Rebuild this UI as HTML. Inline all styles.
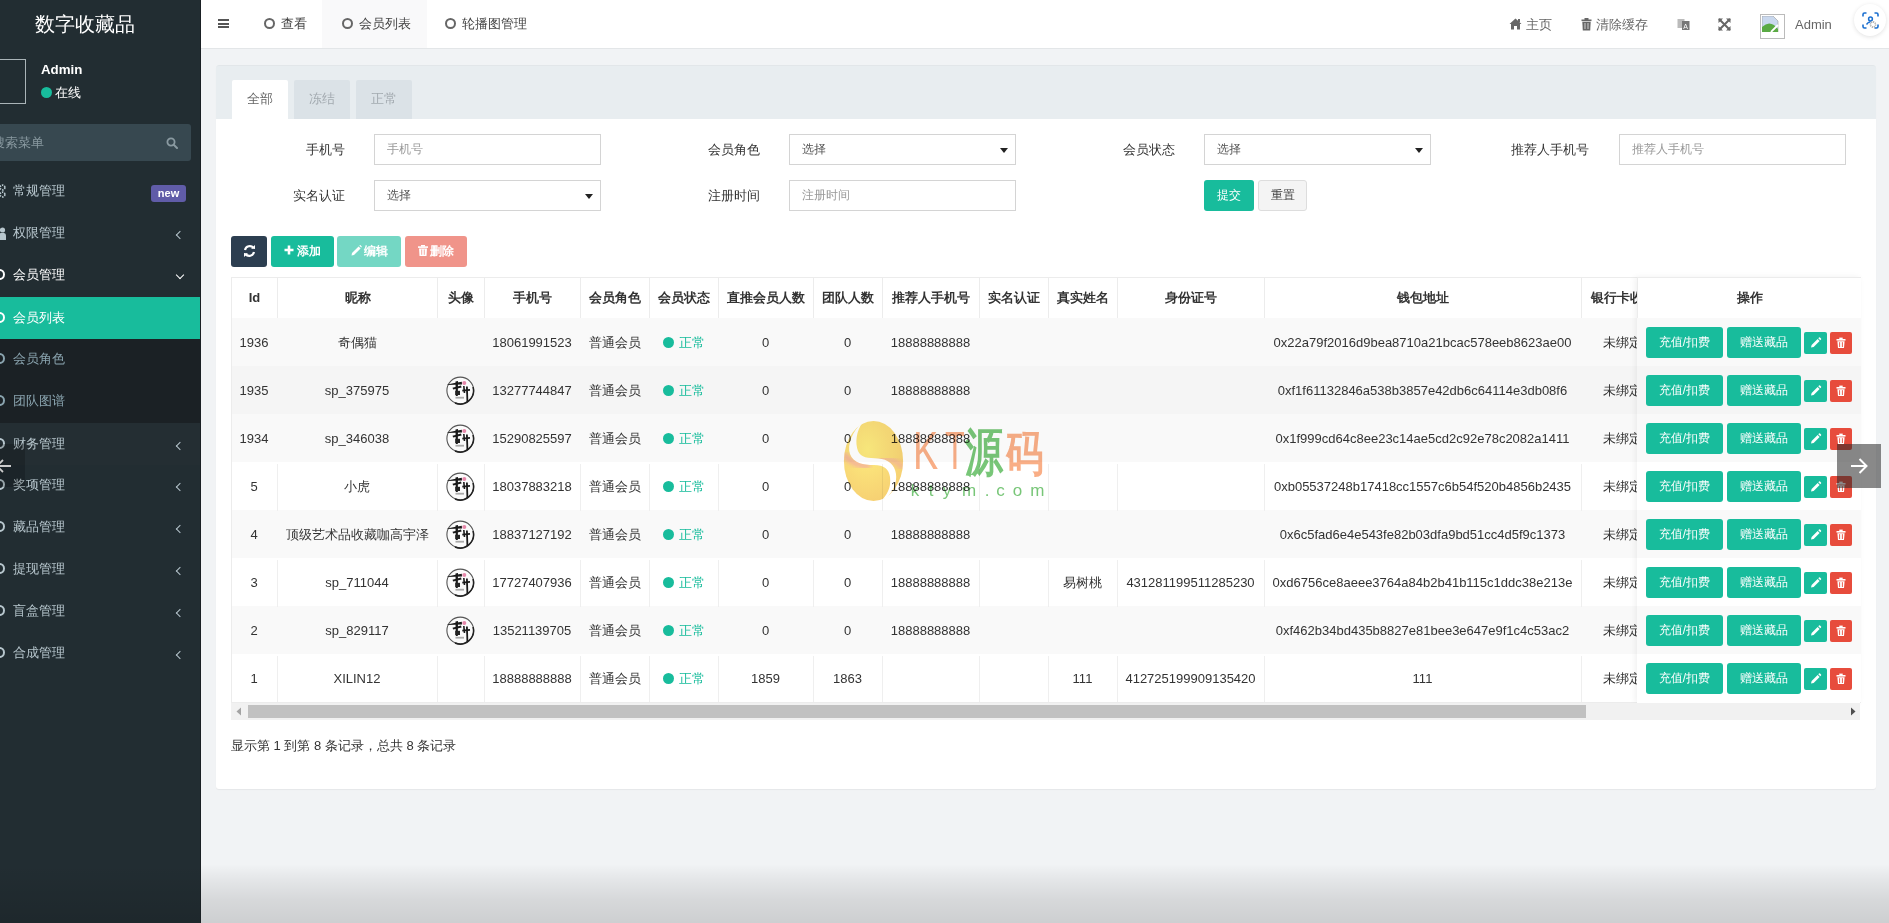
<!DOCTYPE html>
<html><head><meta charset="utf-8">
<style>
*{box-sizing:border-box;margin:0;padding:0}
html,body{width:1889px;height:923px;overflow:hidden}
body{font-family:"Liberation Sans",sans-serif;font-size:13px;color:#333;background:#f1f3f5;position:relative}
.a{position:absolute;white-space:nowrap}
#side{position:absolute;left:0;top:0;width:201px;height:923px;background:#222d32;overflow:hidden;border-right:1px solid #1a2024}
#side .logo{left:0;width:170px;text-align:center;top:10px;font-size:20px;color:#fff;line-height:28px}
.avatar{left:-20px;top:59px;width:46px;height:45px;border:1px solid #aab4b8}
.uname{left:41px;top:62px;font-size:13.3px;font-weight:bold;color:#fff;line-height:16px}
.ustat{left:41px;top:85px;font-size:13px;color:#fff;line-height:16px}
.ustat i{display:inline-block;width:11px;height:11px;border-radius:50%;background:#18bc9c;vertical-align:-1px;margin-right:3px}
.search{left:0;top:124px;width:191px;height:37px;background:#374850;border-radius:0 3px 3px 0}
.search span{position:absolute;left:-8px;top:0;line-height:37px;color:#8a9aa1;font-size:13px}
.mi{position:absolute;left:0;width:200px;height:42px}
.mi .t{position:absolute;left:13px;top:0;line-height:42px;color:#b8c7ce;font-size:13px}
.mi .ic{position:absolute;left:-6px;top:15px;width:11px;height:11px;border:2px solid #b8c7ce;border-radius:50%}
.mi .chev{position:absolute;left:177px;top:20px;width:6px;height:6px;border-left:1.5px solid #b8c7ce;border-bottom:1.5px solid #b8c7ce;transform:rotate(45deg)}
.mi .chev.dn{transform:rotate(-45deg);top:18px}
#hdr{position:absolute;left:201px;top:0;width:1688px;height:49px;background:#fff;border-bottom:1px solid #e3e6e8}
.hb{left:218px;top:19px;width:11px;height:9px;border-top:2px solid #555;border-bottom:2px solid #555}
.hb:after{content:"";position:absolute;left:0;top:1.5px;width:11px;height:2px;background:#555}
.htab{top:0;height:48px;line-height:47px;color:#444;font-size:13px}
.htab i{display:inline-block;width:11px;height:11px;border:2px solid #666;border-radius:50%;vertical-align:-1px;margin-right:6px}
.hr{top:0;height:48px;line-height:49px;color:#666;font-size:13px}
.panel{left:216px;top:65px;width:1660px;height:724px;background:#fff;border-radius:3px;box-shadow:0 1px 1px rgba(0,0,0,.05)}
.ph{left:216px;top:65px;width:1660px;height:54px;background:#e8edf0;border-radius:3px 3px 0 0;border-top:1px solid #e2e6e9}
.ptab{top:80px;height:39px;line-height:37px;text-align:center;font-size:13px;border-radius:2px 2px 0 0}
.lbl{width:120px;text-align:right;font-size:13px;color:#333;line-height:31px}
.inp{height:31px;width:227px;border:1px solid #d4d4d4;background:#fff;font-size:12px;line-height:29px;padding-left:12px;color:#999}
.sel{color:#555}
.sel:after{content:"";position:absolute;right:7px;top:13px;border-left:4px solid transparent;border-right:4px solid transparent;border-top:5px solid #222}
.btn{height:31px;line-height:31px;border-radius:3px;color:#fff;font-size:12px;text-align:center}
.th{position:absolute;top:0;height:41px;line-height:40px;text-align:center;font-weight:bold;font-size:13px;color:#333;border-left:1px solid #ececec;border-bottom:1px solid #ddd;background:#fff}
.tr{position:absolute;left:0;width:1629px;height:48px;}
.td{position:absolute;height:48px;line-height:49px;text-align:center;font-size:13px;color:#333;overflow:hidden}
.vl{position:absolute;top:41px;width:1px;height:385px;background:#efefef}
.dot{display:inline-block;width:11px;height:11px;border-radius:50%;background:#18bc9c;vertical-align:-1px;margin-right:5px}
.av{position:absolute;width:29px;height:29px}
.ob{position:absolute;height:31px;line-height:31px;background:#18bc9c;color:#fff;border-radius:3px;text-align:center;font-size:12px}
.sb{position:absolute;width:23px;height:22px;border-radius:2px}
.sb svg{display:block}

</style></head><body>
<div id="side">
  <div class="a logo">数字收藏品</div>
  <div class="a avatar"></div>
  <div class="a uname">Admin</div>
  <div class="a ustat"><i></i>在线</div>
  <div class="a search"><span>搜索菜单</span>
    <svg style="position:absolute;left:166px;top:13px" width="12" height="12" viewBox="0 0 12 12"><circle cx="5" cy="5" r="3.6" fill="none" stroke="#8a9aa1" stroke-width="1.8"/><path d="M7.6 7.6L11 11" stroke="#8a9aa1" stroke-width="2" stroke-linecap="round"/></svg>
  </div>
  <div class="mi" style="top:170px"><span class="t">常规管理</span><svg class="a" style="left:-8px;top:14px" width="14" height="14" viewBox="0 0 14 14"><g fill="none" stroke="#b8c7ce" stroke-width="1.6" stroke-dasharray="1.4 1"><circle cx="10.5" cy="3.5" r="2.4"/><circle cx="10.5" cy="10.5" r="2.4"/><circle cx="4" cy="7" r="3"/></g></svg><span class="a" style="left:151px;top:15px;width:35px;height:17px;background:#605ca8;border-radius:3px;color:#fff;font-weight:bold;font-size:11px;line-height:17px;text-align:center">new</span></div>
  <div class="mi" style="top:212px"><span class="t">权限管理</span><svg class="a" style="left:-8px;top:15px" width="14" height="13" viewBox="0 0 14 13"><circle cx="10.5" cy="3" r="2.6" fill="#b8c7ce"/><path d="M6.5 13 V8.5 Q6.5 6 9 6 H12 Q14 6 14 8.5 V13 Z" fill="#b8c7ce"/><circle cx="4" cy="4" r="2.4" fill="#b8c7ce"/></svg><i class="chev"></i></div>
  <div class="mi" style="top:254px"><span class="t" style="color:#fff">会员管理</span><i class="ic" style="border-color:#fff"></i><i class="chev dn" style="border-color:#fff"></i></div>
  <div class="mi" style="top:297px;background:#18bc9c"><span class="t" style="color:#fff">会员列表</span><i class="ic" style="border-color:#fff"></i></div>
  <div class="a" style="left:0;top:339px;width:200px;height:84px;background:#1b2125"></div>
  <div class="mi" style="top:338px"><span class="t" style="color:#8aa4af">会员角色</span><i class="ic" style="border-color:#8aa4af"></i></div>
  <div class="mi" style="top:380px"><span class="t" style="color:#8aa4af">团队图谱</span><i class="ic" style="border-color:#8aa4af"></i></div>
  <div class="mi" style="top:423px;background:#242e33"><span class="t">财务管理</span><i class="ic"></i><i class="chev"></i></div>
  <div class="mi" style="top:464px"><span class="t">奖项管理</span><i class="ic"></i><i class="chev"></i></div>
  <div class="mi" style="top:506px"><span class="t">藏品管理</span><i class="ic"></i><i class="chev"></i></div>
  <div class="mi" style="top:548px"><span class="t">提现管理</span><i class="ic"></i><i class="chev"></i></div>
  <div class="mi" style="top:590px"><span class="t">盲盒管理</span><i class="ic"></i><i class="chev"></i></div>
  <div class="mi" style="top:632px"><span class="t">合成管理</span><i class="ic"></i><i class="chev"></i></div>
  <div class="a" style="left:0;top:864px;width:200px;height:59px;background:linear-gradient(rgba(0,0,0,0),rgba(0,0,0,.12))"></div>
  <div class="a" style="left:0;top:444px;width:25px;height:43px;background:rgba(0,0,0,.18)"></div>
  <svg class="a" style="left:-5px;top:457px" width="18" height="18" viewBox="0 0 18 18"><path d="M16 9H2 M8 3L2 9L8 15" stroke="#ccc" stroke-width="1.8" fill="none"/></svg>
</div>
<div id="hdr"></div>
<div class="a hb"></div>
<div class="a htab" style="left:264px"><i></i>查看</div>
<div class="a" style="left:322px;top:0;width:105px;height:48px;background:#f9f9fa"></div>
<div class="a htab" style="left:342px"><i></i>会员列表</div>
<div class="a htab" style="left:445px"><i></i>轮播图管理</div>
<!-- header right -->
<svg class="a" style="left:1509px;top:18px" width="13" height="12" viewBox="0 0 13 12"><path d="M6.5 0.5 L0.5 6 L2 6 L2 11.5 L5 11.5 L5 8 L8 8 L8 11.5 L11 11.5 L11 6 L12.5 6 Z" fill="#666"/><rect x="9" y="1" width="2" height="3" fill="#666"/></svg>
<div class="a hr" style="left:1526px">主页</div>
<svg class="a" style="left:1581px;top:18px" width="11" height="13" viewBox="0 0 11 13"><rect x="0.5" y="1.5" width="10" height="1.6" fill="#666"/><rect x="3.5" y="0" width="4" height="2" fill="#666"/><path d="M1.3 3.8 H9.7 L9.2 12.5 H1.8 Z" fill="#666"/><path d="M4 5 V11 M7 5 V11" stroke="#fff" stroke-width=".7"/></svg>
<div class="a hr" style="left:1596px">清除缓存</div>
<svg class="a" style="left:1677px;top:18px" width="13" height="13" viewBox="0 0 13 13"><rect x="0.5" y="1" width="7" height="9" fill="#bbb"/><rect x="5" y="3" width="7.5" height="9" fill="#777"/><text x="6.2" y="10.5" font-size="7" fill="#fff" font-family="Liberation Sans">A</text></svg>
<svg class="a" style="left:1718px;top:18px" width="13" height="13" viewBox="0 0 13 13"><path d="M1 1 L12 12 M12 1 L1 12" stroke="#666" stroke-width="2"/><path d="M0.5 0.5 H5 L0.5 5 Z M12.5 0.5 H8 L12.5 5 Z M0.5 12.5 H5 L0.5 8 Z M12.5 12.5 H8 L12.5 8 Z" fill="#666"/></svg>
<div class="a" style="left:1760px;top:14px;width:25px;height:25px;border:1px solid #bbb;background:#fff"></div>
<svg class="a" style="left:1762px;top:16px" width="17" height="16" viewBox="0 0 17 16"><path d="M0 0 H11 L16 5 V16 H0 Z" fill="#c9d8ee" stroke="#999" stroke-width=".6"/><path d="M0 16 V11 Q6 5 12 9 L16 13 V16 Z" fill="#5aaa44"/><path d="M9 16 L16 9" stroke="#fff" stroke-width="1.8"/></svg>
<div class="a hr" style="left:1795px;font-size:13px">Admin</div>
<div class="a" style="left:1854px;top:4px;width:32px;height:32px;border-radius:50%;background:#fff;box-shadow:0 1px 4px rgba(0,0,0,.12)"></div>
<svg class="a" style="left:1862px;top:12px" width="17" height="17" viewBox="0 0 17 17"><path d="M1 4.5 V2.5 Q1 1 2.5 1 H4.5 M12.5 1 H14.5 Q16 1 16 2.5 V4.5 M16 12.5 V14.5 Q16 16 14.5 16 H12.5 M4.5 16 H2.5 Q1 16 1 14.5 V12.5" stroke="#1a6fd0" stroke-width="1.6" fill="none"/><circle cx="8.5" cy="7" r="1.9" stroke="#1a6fd0" stroke-width="1.5" fill="none"/><path d="M4.5 12.5 Q6.5 9.5 8.5 10" stroke="#1a6fd0" stroke-width="1.4" fill="none"/><circle cx="11" cy="12.5" r="2.6" stroke="#aaa" stroke-width="1.6" stroke-dasharray="1.2 .8" fill="none"/></svg>
<!-- panel -->
<div class="a panel"></div>
<div class="a ph"></div>
<div class="a ptab" style="left:232px;width:56px;background:#fff;color:#666">全部</div>
<div class="a ptab" style="left:294px;width:56px;background:#dbe2e7;color:#a3aab0">冻结</div>
<div class="a ptab" style="left:356px;width:56px;background:#dbe2e7;color:#a3aab0">正常</div>
<!-- form -->
<div class="a lbl" style="left:225px;top:134px">手机号</div>
<div class="a inp" style="left:374px;top:134px">手机号</div>
<div class="a lbl" style="left:640px;top:134px">会员角色</div>
<div class="a inp sel" style="left:789px;top:134px">选择</div>
<div class="a lbl" style="left:1055px;top:134px">会员状态</div>
<div class="a inp sel" style="left:1204px;top:134px">选择</div>
<div class="a lbl" style="left:1469px;top:134px">推荐人手机号</div>
<div class="a inp" style="left:1619px;top:134px">推荐人手机号</div>
<div class="a lbl" style="left:225px;top:180px">实名认证</div>
<div class="a inp sel" style="left:374px;top:180px">选择</div>
<div class="a lbl" style="left:640px;top:180px">注册时间</div>
<div class="a inp" style="left:789px;top:180px">注册时间</div>
<div class="a btn" style="left:1204px;top:180px;width:50px;background:#18bc9c">提交</div>
<div class="a btn" style="left:1258px;top:180px;width:49px;background:#f4f4f4;border:1px solid #ddd;color:#444;line-height:29px">重置</div>
<!-- toolbar -->
<div class="a btn" style="left:231px;top:236px;width:36px;background:#2c3e50"><svg style="margin-top:8px" width="13" height="14" viewBox="0 0 13 14"><path d="M2 6 A4.8 4.8 0 0 1 10.5 4" stroke="#fff" stroke-width="2.2" fill="none"/><path d="M8 4.6 L12 5 L12 1 Z" fill="#fff"/><path d="M11 8 A4.8 4.8 0 0 1 2.5 10" stroke="#fff" stroke-width="2.2" fill="none"/><path d="M5 9.4 L1 9 L1 13 Z" fill="#fff"/></svg></div>
<div class="a btn" style="left:271px;top:236px;width:63px;background:#18bc9c"><svg width="10" height="10" viewBox="0 0 10 10" style="vertical-align:0px;margin-right:3px"><path d="M5 0.5 V9.5 M0.5 5 H9.5" stroke="#fff" stroke-width="2.6"/></svg><b>添加</b></div>
<div class="a btn" style="left:337px;top:236px;width:64px;background:#74d7c4"><svg width="11" height="11" viewBox="0 0 11 11" style="vertical-align:-1px;margin-right:2px"><path d="M0.5 10.5 L1 8 L7.6 1.4 L9.6 3.4 L3 10 Z" fill="#fff"/><path d="M8.3 0.7 L8.8 0.2 Q9.2 -0.1 9.6 0.3 L10.7 1.4 Q11 1.8 10.7 2.1 L10.2 2.6 Z" fill="#fff"/></svg><b style="font-weight:bold">编辑</b></div>
<div class="a btn" style="left:405px;top:236px;width:62px;background:#f0948a"><svg width="10" height="11" viewBox="0 0 10 11" style="vertical-align:-1px;margin-right:2px"><rect x="0" y="1.3" width="10" height="1.6" fill="#fff"/><rect x="3" y="0" width="4" height="1.6" fill="#fff"/><path d="M1 3.4 H9 L8.5 11 H1.5 Z" fill="#fff"/><path d="M3.7 4.5 V9.8 M6.3 4.5 V9.8" stroke="#f0948a" stroke-width=".8"/></svg><b>删除</b></div>
<div class="a" style="left:231px;top:277px;width:1629px;height:426px;overflow:hidden;border:1px solid #ececec;border-right:0;background:#fff">
<div class="th" style="left:-1px;width:46px">Id</div>
<div class="th" style="left:45px;width:160px">昵称</div>
<div class="th" style="left:205px;width:47px">头像</div>
<div class="th" style="left:252px;width:96px">手机号</div>
<div class="th" style="left:348px;width:69px">会员角色</div>
<div class="th" style="left:417px;width:69px">会员状态</div>
<div class="th" style="left:486px;width:95px">直推会员人数</div>
<div class="th" style="left:581px;width:69px">团队人数</div>
<div class="th" style="left:650px;width:97px">推荐人手机号</div>
<div class="th" style="left:747px;width:69px">实名认证</div>
<div class="th" style="left:816px;width:69px">真实姓名</div>
<div class="th" style="left:885px;width:147px">身份证号</div>
<div class="th" style="left:1032px;width:317px">钱包地址</div>
<div class="th" style="left:1349px;width:83px">银行卡收款</div>
<div class="tr" style="top:40px;background:#f9f9f9"></div>
<div class="td" style="left:-1px;top:40px;width:46px">1936</div>
<div class="td" style="left:45px;top:40px;width:160px">奇偶猫</div>
<div class="td" style="left:252px;top:40px;width:96px">18061991523</div>
<div class="td" style="left:348px;top:40px;width:69px">普通会员</div>
<div class="td" style="left:417px;top:40px;width:69px;color:#18bc9c"><i class="dot"></i>正常</div>
<div class="td" style="left:486px;top:40px;width:95px">0</div>
<div class="td" style="left:581px;top:40px;width:69px">0</div>
<div class="td" style="left:650px;top:40px;width:97px">18888888888</div>
<div class="td" style="left:1032px;top:40px;width:317px">0x22a79f2016d9bea8710a21bcac578eeb8623ae00</div>
<div class="td" style="left:1349px;top:40px;width:83px">未绑定</div>
<div class="tr" style="top:88px;background:#f5f5f5"></div>
<div class="td" style="left:-1px;top:88px;width:46px">1935</div>
<div class="td" style="left:45px;top:88px;width:160px">sp_375975</div>
<div class="av" style="left:214px;top:98px"><svg width="29" height="29" viewBox="0 0 29 29"><circle cx="14.3" cy="14.5" r="13.4" fill="#fbfbfb" stroke="#555" stroke-width="1.1"/><path d="M27 11 A13.4 13.4 0 0 1 9 27" stroke="#222" stroke-width="1.5" fill="none"/><path d="M1.5 8.4 Q8 6.8 15.8 5.8 L16 8.4 Q8 8.6 1.5 8.9 Z" fill="#1a1a1a"/><path d="M9.5 5.5 L12 5 L11.8 20 L9.8 20 Z" fill="#1a1a1a"/><path d="M6.5 11.8 L15 9.4 L15.6 11.6 L7.2 13.4 Z" fill="#1a1a1a"/><path d="M9.2 14.8 H14 V19 H9.2 Z" fill="#222"/><rect x="9.5" y="20.8" width="8.5" height="1.8" fill="#aaa"/><path d="M20.9 10.5 L21.4 25.5" stroke="#1a1a1a" stroke-width="1.8"/><path d="M16.3 14.6 L24 13.9" stroke="#1a1a1a" stroke-width="1.8"/><path d="M17.8 10 L18.5 17" stroke="#1a1a1a" stroke-width="1.6"/><circle cx="18.3" cy="6.9" r="2" fill="#e688aa"/></svg></div>
<div class="td" style="left:252px;top:88px;width:96px">13277744847</div>
<div class="td" style="left:348px;top:88px;width:69px">普通会员</div>
<div class="td" style="left:417px;top:88px;width:69px;color:#18bc9c"><i class="dot"></i>正常</div>
<div class="td" style="left:486px;top:88px;width:95px">0</div>
<div class="td" style="left:581px;top:88px;width:69px">0</div>
<div class="td" style="left:650px;top:88px;width:97px">18888888888</div>
<div class="td" style="left:1032px;top:88px;width:317px">0xf1f61132846a538b3857e42db6c64114e3db08f6</div>
<div class="td" style="left:1349px;top:88px;width:83px">未绑定</div>
<div class="tr" style="top:136px;background:#f9f9f9"></div>
<div class="td" style="left:-1px;top:136px;width:46px">1934</div>
<div class="td" style="left:45px;top:136px;width:160px">sp_346038</div>
<div class="av" style="left:214px;top:146px"><svg width="29" height="29" viewBox="0 0 29 29"><circle cx="14.3" cy="14.5" r="13.4" fill="#fbfbfb" stroke="#555" stroke-width="1.1"/><path d="M27 11 A13.4 13.4 0 0 1 9 27" stroke="#222" stroke-width="1.5" fill="none"/><path d="M1.5 8.4 Q8 6.8 15.8 5.8 L16 8.4 Q8 8.6 1.5 8.9 Z" fill="#1a1a1a"/><path d="M9.5 5.5 L12 5 L11.8 20 L9.8 20 Z" fill="#1a1a1a"/><path d="M6.5 11.8 L15 9.4 L15.6 11.6 L7.2 13.4 Z" fill="#1a1a1a"/><path d="M9.2 14.8 H14 V19 H9.2 Z" fill="#222"/><rect x="9.5" y="20.8" width="8.5" height="1.8" fill="#aaa"/><path d="M20.9 10.5 L21.4 25.5" stroke="#1a1a1a" stroke-width="1.8"/><path d="M16.3 14.6 L24 13.9" stroke="#1a1a1a" stroke-width="1.8"/><path d="M17.8 10 L18.5 17" stroke="#1a1a1a" stroke-width="1.6"/><circle cx="18.3" cy="6.9" r="2" fill="#e688aa"/></svg></div>
<div class="td" style="left:252px;top:136px;width:96px">15290825597</div>
<div class="td" style="left:348px;top:136px;width:69px">普通会员</div>
<div class="td" style="left:417px;top:136px;width:69px;color:#18bc9c"><i class="dot"></i>正常</div>
<div class="td" style="left:486px;top:136px;width:95px">0</div>
<div class="td" style="left:581px;top:136px;width:69px">0</div>
<div class="td" style="left:650px;top:136px;width:97px">18888888888</div>
<div class="td" style="left:1032px;top:136px;width:317px">0x1f999cd64c8ee23c14ae5cd2c92e78c2082a1411</div>
<div class="td" style="left:1349px;top:136px;width:83px">未绑定</div>
<div class="tr" style="top:184px;background:#fff"></div>
<div class="td" style="left:-1px;top:184px;width:46px">5</div>
<div class="td" style="left:45px;top:184px;width:160px">小虎</div>
<div class="av" style="left:214px;top:194px"><svg width="29" height="29" viewBox="0 0 29 29"><circle cx="14.3" cy="14.5" r="13.4" fill="#fbfbfb" stroke="#555" stroke-width="1.1"/><path d="M27 11 A13.4 13.4 0 0 1 9 27" stroke="#222" stroke-width="1.5" fill="none"/><path d="M1.5 8.4 Q8 6.8 15.8 5.8 L16 8.4 Q8 8.6 1.5 8.9 Z" fill="#1a1a1a"/><path d="M9.5 5.5 L12 5 L11.8 20 L9.8 20 Z" fill="#1a1a1a"/><path d="M6.5 11.8 L15 9.4 L15.6 11.6 L7.2 13.4 Z" fill="#1a1a1a"/><path d="M9.2 14.8 H14 V19 H9.2 Z" fill="#222"/><rect x="9.5" y="20.8" width="8.5" height="1.8" fill="#aaa"/><path d="M20.9 10.5 L21.4 25.5" stroke="#1a1a1a" stroke-width="1.8"/><path d="M16.3 14.6 L24 13.9" stroke="#1a1a1a" stroke-width="1.8"/><path d="M17.8 10 L18.5 17" stroke="#1a1a1a" stroke-width="1.6"/><circle cx="18.3" cy="6.9" r="2" fill="#e688aa"/></svg></div>
<div class="td" style="left:252px;top:184px;width:96px">18037883218</div>
<div class="td" style="left:348px;top:184px;width:69px">普通会员</div>
<div class="td" style="left:417px;top:184px;width:69px;color:#18bc9c"><i class="dot"></i>正常</div>
<div class="td" style="left:486px;top:184px;width:95px">0</div>
<div class="td" style="left:581px;top:184px;width:69px">0</div>
<div class="td" style="left:650px;top:184px;width:97px">18888888888</div>
<div class="td" style="left:1032px;top:184px;width:317px">0xb05537248b17418cc1557c6b54f520b4856b2435</div>
<div class="td" style="left:1349px;top:184px;width:83px">未绑定</div>
<div class="tr" style="top:232px;background:#f9f9f9"></div>
<div class="td" style="left:-1px;top:232px;width:46px">4</div>
<div class="td" style="left:45px;top:232px;width:160px">顶级艺术品收藏咖高宇泽</div>
<div class="av" style="left:214px;top:242px"><svg width="29" height="29" viewBox="0 0 29 29"><circle cx="14.3" cy="14.5" r="13.4" fill="#fbfbfb" stroke="#555" stroke-width="1.1"/><path d="M27 11 A13.4 13.4 0 0 1 9 27" stroke="#222" stroke-width="1.5" fill="none"/><path d="M1.5 8.4 Q8 6.8 15.8 5.8 L16 8.4 Q8 8.6 1.5 8.9 Z" fill="#1a1a1a"/><path d="M9.5 5.5 L12 5 L11.8 20 L9.8 20 Z" fill="#1a1a1a"/><path d="M6.5 11.8 L15 9.4 L15.6 11.6 L7.2 13.4 Z" fill="#1a1a1a"/><path d="M9.2 14.8 H14 V19 H9.2 Z" fill="#222"/><rect x="9.5" y="20.8" width="8.5" height="1.8" fill="#aaa"/><path d="M20.9 10.5 L21.4 25.5" stroke="#1a1a1a" stroke-width="1.8"/><path d="M16.3 14.6 L24 13.9" stroke="#1a1a1a" stroke-width="1.8"/><path d="M17.8 10 L18.5 17" stroke="#1a1a1a" stroke-width="1.6"/><circle cx="18.3" cy="6.9" r="2" fill="#e688aa"/></svg></div>
<div class="td" style="left:252px;top:232px;width:96px">18837127192</div>
<div class="td" style="left:348px;top:232px;width:69px">普通会员</div>
<div class="td" style="left:417px;top:232px;width:69px;color:#18bc9c"><i class="dot"></i>正常</div>
<div class="td" style="left:486px;top:232px;width:95px">0</div>
<div class="td" style="left:581px;top:232px;width:69px">0</div>
<div class="td" style="left:650px;top:232px;width:97px">18888888888</div>
<div class="td" style="left:1032px;top:232px;width:317px">0x6c5fad6e4e543fe82b03dfa9bd51cc4d5f9c1373</div>
<div class="td" style="left:1349px;top:232px;width:83px">未绑定</div>
<div class="tr" style="top:280px;background:#fff"></div>
<div class="td" style="left:-1px;top:280px;width:46px">3</div>
<div class="td" style="left:45px;top:280px;width:160px">sp_711044</div>
<div class="av" style="left:214px;top:290px"><svg width="29" height="29" viewBox="0 0 29 29"><circle cx="14.3" cy="14.5" r="13.4" fill="#fbfbfb" stroke="#555" stroke-width="1.1"/><path d="M27 11 A13.4 13.4 0 0 1 9 27" stroke="#222" stroke-width="1.5" fill="none"/><path d="M1.5 8.4 Q8 6.8 15.8 5.8 L16 8.4 Q8 8.6 1.5 8.9 Z" fill="#1a1a1a"/><path d="M9.5 5.5 L12 5 L11.8 20 L9.8 20 Z" fill="#1a1a1a"/><path d="M6.5 11.8 L15 9.4 L15.6 11.6 L7.2 13.4 Z" fill="#1a1a1a"/><path d="M9.2 14.8 H14 V19 H9.2 Z" fill="#222"/><rect x="9.5" y="20.8" width="8.5" height="1.8" fill="#aaa"/><path d="M20.9 10.5 L21.4 25.5" stroke="#1a1a1a" stroke-width="1.8"/><path d="M16.3 14.6 L24 13.9" stroke="#1a1a1a" stroke-width="1.8"/><path d="M17.8 10 L18.5 17" stroke="#1a1a1a" stroke-width="1.6"/><circle cx="18.3" cy="6.9" r="2" fill="#e688aa"/></svg></div>
<div class="td" style="left:252px;top:280px;width:96px">17727407936</div>
<div class="td" style="left:348px;top:280px;width:69px">普通会员</div>
<div class="td" style="left:417px;top:280px;width:69px;color:#18bc9c"><i class="dot"></i>正常</div>
<div class="td" style="left:486px;top:280px;width:95px">0</div>
<div class="td" style="left:581px;top:280px;width:69px">0</div>
<div class="td" style="left:650px;top:280px;width:97px">18888888888</div>
<div class="td" style="left:816px;top:280px;width:69px">易树桃</div>
<div class="td" style="left:885px;top:280px;width:147px">431281199511285230</div>
<div class="td" style="left:1032px;top:280px;width:317px">0xd6756ce8aeee3764a84b2b41b115c1ddc38e213e</div>
<div class="td" style="left:1349px;top:280px;width:83px">未绑定</div>
<div class="tr" style="top:328px;background:#f9f9f9"></div>
<div class="td" style="left:-1px;top:328px;width:46px">2</div>
<div class="td" style="left:45px;top:328px;width:160px">sp_829117</div>
<div class="av" style="left:214px;top:338px"><svg width="29" height="29" viewBox="0 0 29 29"><circle cx="14.3" cy="14.5" r="13.4" fill="#fbfbfb" stroke="#555" stroke-width="1.1"/><path d="M27 11 A13.4 13.4 0 0 1 9 27" stroke="#222" stroke-width="1.5" fill="none"/><path d="M1.5 8.4 Q8 6.8 15.8 5.8 L16 8.4 Q8 8.6 1.5 8.9 Z" fill="#1a1a1a"/><path d="M9.5 5.5 L12 5 L11.8 20 L9.8 20 Z" fill="#1a1a1a"/><path d="M6.5 11.8 L15 9.4 L15.6 11.6 L7.2 13.4 Z" fill="#1a1a1a"/><path d="M9.2 14.8 H14 V19 H9.2 Z" fill="#222"/><rect x="9.5" y="20.8" width="8.5" height="1.8" fill="#aaa"/><path d="M20.9 10.5 L21.4 25.5" stroke="#1a1a1a" stroke-width="1.8"/><path d="M16.3 14.6 L24 13.9" stroke="#1a1a1a" stroke-width="1.8"/><path d="M17.8 10 L18.5 17" stroke="#1a1a1a" stroke-width="1.6"/><circle cx="18.3" cy="6.9" r="2" fill="#e688aa"/></svg></div>
<div class="td" style="left:252px;top:328px;width:96px">13521139705</div>
<div class="td" style="left:348px;top:328px;width:69px">普通会员</div>
<div class="td" style="left:417px;top:328px;width:69px;color:#18bc9c"><i class="dot"></i>正常</div>
<div class="td" style="left:486px;top:328px;width:95px">0</div>
<div class="td" style="left:581px;top:328px;width:69px">0</div>
<div class="td" style="left:650px;top:328px;width:97px">18888888888</div>
<div class="td" style="left:1032px;top:328px;width:317px">0xf462b34bd435b8827e81bee3e647e9f1c4c53ac2</div>
<div class="td" style="left:1349px;top:328px;width:83px">未绑定</div>
<div class="tr" style="top:376px;background:#fff"></div>
<div class="td" style="left:-1px;top:376px;width:46px">1</div>
<div class="td" style="left:45px;top:376px;width:160px">XILIN12</div>
<div class="td" style="left:252px;top:376px;width:96px">18888888888</div>
<div class="td" style="left:348px;top:376px;width:69px">普通会员</div>
<div class="td" style="left:417px;top:376px;width:69px;color:#18bc9c"><i class="dot"></i>正常</div>
<div class="td" style="left:486px;top:376px;width:95px">1859</div>
<div class="td" style="left:581px;top:376px;width:69px">1863</div>
<div class="td" style="left:816px;top:376px;width:69px">111</div>
<div class="td" style="left:885px;top:376px;width:147px">412725199909135420</div>
<div class="td" style="left:1032px;top:376px;width:317px">111</div>
<div class="td" style="left:1349px;top:376px;width:83px">未绑定</div>
<div class="vl" style="left:45px;top:186px;height:47px"></div>
<div class="vl" style="left:205px;top:186px;height:47px"></div>
<div class="vl" style="left:252px;top:186px;height:47px"></div>
<div class="vl" style="left:348px;top:186px;height:47px"></div>
<div class="vl" style="left:417px;top:186px;height:47px"></div>
<div class="vl" style="left:486px;top:186px;height:47px"></div>
<div class="vl" style="left:581px;top:186px;height:47px"></div>
<div class="vl" style="left:650px;top:186px;height:47px"></div>
<div class="vl" style="left:747px;top:186px;height:47px"></div>
<div class="vl" style="left:816px;top:186px;height:47px"></div>
<div class="vl" style="left:885px;top:186px;height:47px"></div>
<div class="vl" style="left:1032px;top:186px;height:47px"></div>
<div class="vl" style="left:1349px;top:186px;height:47px"></div>
<div class="vl" style="left:45px;top:282px;height:47px"></div>
<div class="vl" style="left:205px;top:282px;height:47px"></div>
<div class="vl" style="left:252px;top:282px;height:47px"></div>
<div class="vl" style="left:348px;top:282px;height:47px"></div>
<div class="vl" style="left:417px;top:282px;height:47px"></div>
<div class="vl" style="left:486px;top:282px;height:47px"></div>
<div class="vl" style="left:581px;top:282px;height:47px"></div>
<div class="vl" style="left:650px;top:282px;height:47px"></div>
<div class="vl" style="left:747px;top:282px;height:47px"></div>
<div class="vl" style="left:816px;top:282px;height:47px"></div>
<div class="vl" style="left:885px;top:282px;height:47px"></div>
<div class="vl" style="left:1032px;top:282px;height:47px"></div>
<div class="vl" style="left:1349px;top:282px;height:47px"></div>
<div class="vl" style="left:45px;top:378px;height:47px"></div>
<div class="vl" style="left:205px;top:378px;height:47px"></div>
<div class="vl" style="left:252px;top:378px;height:47px"></div>
<div class="vl" style="left:348px;top:378px;height:47px"></div>
<div class="vl" style="left:417px;top:378px;height:47px"></div>
<div class="vl" style="left:486px;top:378px;height:47px"></div>
<div class="vl" style="left:581px;top:378px;height:47px"></div>
<div class="vl" style="left:650px;top:378px;height:47px"></div>
<div class="vl" style="left:747px;top:378px;height:47px"></div>
<div class="vl" style="left:816px;top:378px;height:47px"></div>
<div class="vl" style="left:885px;top:378px;height:47px"></div>
<div class="vl" style="left:1032px;top:378px;height:47px"></div>
<div class="vl" style="left:1349px;top:378px;height:47px"></div>
</div><div class="a" style="left:1637px;top:277px;width:224px;height:426px;background:#fff;box-shadow:-2px 0 6px rgba(0,0,0,.06);border-top:1px solid #ececec;border-right:1px solid #ececec">
<div class="th" style="left:0;width:224px">操作</div>
<div class="tr" style="top:40px;background:#f9f9f9;width:224px"></div>
<div class="ob" style="left:9px;top:49px;width:77px">充值/扣费</div>
<div class="ob" style="left:90px;top:49px;width:74px">赠送藏品</div>
<div class="sb" style="left:167px;top:54px;background:#18bc9c"><svg width="23" height="22" viewBox="0 0 23 22"><path d="M7 15.5 L7.6 13 L13.6 7 L15.6 9 L9.6 15 Z" fill="#fff"/><path d="M14.3 6.3 L15 5.6 Q15.5 5.1 16 5.6 L17 6.6 Q17.5 7.1 17 7.6 L16.3 8.3 Z" fill="#fff"/></svg></div>
<div class="sb" style="left:193px;top:54px;background:#e74c3c;width:22px"><svg width="22" height="22" viewBox="0 0 22 22"><rect x="6.5" y="7" width="9" height="1.6" fill="#fff"/><rect x="9.3" y="5.6" width="3.4" height="1.6" fill="#fff"/><path d="M7.4 9.2 H14.6 L14 16 H8 Z" fill="#fff"/><path d="M9.6 10.2 V15 M12.4 10.2 V15" stroke="#e74c3c" stroke-width=".9"/></svg></div>
<div class="tr" style="top:88px;background:#f5f5f5;width:224px"></div>
<div class="ob" style="left:9px;top:97px;width:77px">充值/扣费</div>
<div class="ob" style="left:90px;top:97px;width:74px">赠送藏品</div>
<div class="sb" style="left:167px;top:102px;background:#18bc9c"><svg width="23" height="22" viewBox="0 0 23 22"><path d="M7 15.5 L7.6 13 L13.6 7 L15.6 9 L9.6 15 Z" fill="#fff"/><path d="M14.3 6.3 L15 5.6 Q15.5 5.1 16 5.6 L17 6.6 Q17.5 7.1 17 7.6 L16.3 8.3 Z" fill="#fff"/></svg></div>
<div class="sb" style="left:193px;top:102px;background:#e74c3c;width:22px"><svg width="22" height="22" viewBox="0 0 22 22"><rect x="6.5" y="7" width="9" height="1.6" fill="#fff"/><rect x="9.3" y="5.6" width="3.4" height="1.6" fill="#fff"/><path d="M7.4 9.2 H14.6 L14 16 H8 Z" fill="#fff"/><path d="M9.6 10.2 V15 M12.4 10.2 V15" stroke="#e74c3c" stroke-width=".9"/></svg></div>
<div class="tr" style="top:136px;background:#f9f9f9;width:224px"></div>
<div class="ob" style="left:9px;top:145px;width:77px">充值/扣费</div>
<div class="ob" style="left:90px;top:145px;width:74px">赠送藏品</div>
<div class="sb" style="left:167px;top:150px;background:#18bc9c"><svg width="23" height="22" viewBox="0 0 23 22"><path d="M7 15.5 L7.6 13 L13.6 7 L15.6 9 L9.6 15 Z" fill="#fff"/><path d="M14.3 6.3 L15 5.6 Q15.5 5.1 16 5.6 L17 6.6 Q17.5 7.1 17 7.6 L16.3 8.3 Z" fill="#fff"/></svg></div>
<div class="sb" style="left:193px;top:150px;background:#e74c3c;width:22px"><svg width="22" height="22" viewBox="0 0 22 22"><rect x="6.5" y="7" width="9" height="1.6" fill="#fff"/><rect x="9.3" y="5.6" width="3.4" height="1.6" fill="#fff"/><path d="M7.4 9.2 H14.6 L14 16 H8 Z" fill="#fff"/><path d="M9.6 10.2 V15 M12.4 10.2 V15" stroke="#e74c3c" stroke-width=".9"/></svg></div>
<div class="tr" style="top:184px;background:#fff;width:224px"></div>
<div class="ob" style="left:9px;top:193px;width:77px">充值/扣费</div>
<div class="ob" style="left:90px;top:193px;width:74px">赠送藏品</div>
<div class="sb" style="left:167px;top:198px;background:#18bc9c"><svg width="23" height="22" viewBox="0 0 23 22"><path d="M7 15.5 L7.6 13 L13.6 7 L15.6 9 L9.6 15 Z" fill="#fff"/><path d="M14.3 6.3 L15 5.6 Q15.5 5.1 16 5.6 L17 6.6 Q17.5 7.1 17 7.6 L16.3 8.3 Z" fill="#fff"/></svg></div>
<div class="sb" style="left:193px;top:198px;background:#e74c3c;width:22px"><svg width="22" height="22" viewBox="0 0 22 22"><rect x="6.5" y="7" width="9" height="1.6" fill="#fff"/><rect x="9.3" y="5.6" width="3.4" height="1.6" fill="#fff"/><path d="M7.4 9.2 H14.6 L14 16 H8 Z" fill="#fff"/><path d="M9.6 10.2 V15 M12.4 10.2 V15" stroke="#e74c3c" stroke-width=".9"/></svg></div>
<div class="tr" style="top:232px;background:#f9f9f9;width:224px"></div>
<div class="ob" style="left:9px;top:241px;width:77px">充值/扣费</div>
<div class="ob" style="left:90px;top:241px;width:74px">赠送藏品</div>
<div class="sb" style="left:167px;top:246px;background:#18bc9c"><svg width="23" height="22" viewBox="0 0 23 22"><path d="M7 15.5 L7.6 13 L13.6 7 L15.6 9 L9.6 15 Z" fill="#fff"/><path d="M14.3 6.3 L15 5.6 Q15.5 5.1 16 5.6 L17 6.6 Q17.5 7.1 17 7.6 L16.3 8.3 Z" fill="#fff"/></svg></div>
<div class="sb" style="left:193px;top:246px;background:#e74c3c;width:22px"><svg width="22" height="22" viewBox="0 0 22 22"><rect x="6.5" y="7" width="9" height="1.6" fill="#fff"/><rect x="9.3" y="5.6" width="3.4" height="1.6" fill="#fff"/><path d="M7.4 9.2 H14.6 L14 16 H8 Z" fill="#fff"/><path d="M9.6 10.2 V15 M12.4 10.2 V15" stroke="#e74c3c" stroke-width=".9"/></svg></div>
<div class="tr" style="top:280px;background:#fff;width:224px"></div>
<div class="ob" style="left:9px;top:289px;width:77px">充值/扣费</div>
<div class="ob" style="left:90px;top:289px;width:74px">赠送藏品</div>
<div class="sb" style="left:167px;top:294px;background:#18bc9c"><svg width="23" height="22" viewBox="0 0 23 22"><path d="M7 15.5 L7.6 13 L13.6 7 L15.6 9 L9.6 15 Z" fill="#fff"/><path d="M14.3 6.3 L15 5.6 Q15.5 5.1 16 5.6 L17 6.6 Q17.5 7.1 17 7.6 L16.3 8.3 Z" fill="#fff"/></svg></div>
<div class="sb" style="left:193px;top:294px;background:#e74c3c;width:22px"><svg width="22" height="22" viewBox="0 0 22 22"><rect x="6.5" y="7" width="9" height="1.6" fill="#fff"/><rect x="9.3" y="5.6" width="3.4" height="1.6" fill="#fff"/><path d="M7.4 9.2 H14.6 L14 16 H8 Z" fill="#fff"/><path d="M9.6 10.2 V15 M12.4 10.2 V15" stroke="#e74c3c" stroke-width=".9"/></svg></div>
<div class="tr" style="top:328px;background:#f9f9f9;width:224px"></div>
<div class="ob" style="left:9px;top:337px;width:77px">充值/扣费</div>
<div class="ob" style="left:90px;top:337px;width:74px">赠送藏品</div>
<div class="sb" style="left:167px;top:342px;background:#18bc9c"><svg width="23" height="22" viewBox="0 0 23 22"><path d="M7 15.5 L7.6 13 L13.6 7 L15.6 9 L9.6 15 Z" fill="#fff"/><path d="M14.3 6.3 L15 5.6 Q15.5 5.1 16 5.6 L17 6.6 Q17.5 7.1 17 7.6 L16.3 8.3 Z" fill="#fff"/></svg></div>
<div class="sb" style="left:193px;top:342px;background:#e74c3c;width:22px"><svg width="22" height="22" viewBox="0 0 22 22"><rect x="6.5" y="7" width="9" height="1.6" fill="#fff"/><rect x="9.3" y="5.6" width="3.4" height="1.6" fill="#fff"/><path d="M7.4 9.2 H14.6 L14 16 H8 Z" fill="#fff"/><path d="M9.6 10.2 V15 M12.4 10.2 V15" stroke="#e74c3c" stroke-width=".9"/></svg></div>
<div class="tr" style="top:376px;background:#fff;width:224px"></div>
<div class="ob" style="left:9px;top:385px;width:77px">充值/扣费</div>
<div class="ob" style="left:90px;top:385px;width:74px">赠送藏品</div>
<div class="sb" style="left:167px;top:390px;background:#18bc9c"><svg width="23" height="22" viewBox="0 0 23 22"><path d="M7 15.5 L7.6 13 L13.6 7 L15.6 9 L9.6 15 Z" fill="#fff"/><path d="M14.3 6.3 L15 5.6 Q15.5 5.1 16 5.6 L17 6.6 Q17.5 7.1 17 7.6 L16.3 8.3 Z" fill="#fff"/></svg></div>
<div class="sb" style="left:193px;top:390px;background:#e74c3c;width:22px"><svg width="22" height="22" viewBox="0 0 22 22"><rect x="6.5" y="7" width="9" height="1.6" fill="#fff"/><rect x="9.3" y="5.6" width="3.4" height="1.6" fill="#fff"/><path d="M7.4 9.2 H14.6 L14 16 H8 Z" fill="#fff"/><path d="M9.6 10.2 V15 M12.4 10.2 V15" stroke="#e74c3c" stroke-width=".9"/></svg></div>
</div><!-- scrollbar -->
<div class="a" style="left:231px;top:703px;width:1629px;height:17px;background:#f1f1f1"></div>
<div class="a" style="left:248px;top:705px;width:1338px;height:13px;background:#c1c1c1"></div>
<svg class="a" style="left:235px;top:707px" width="8" height="9" viewBox="0 0 8 9"><path d="M6 0.5 V8.5 L1.5 4.5 Z" fill="#a3a3a3"/></svg>
<svg class="a" style="left:1849px;top:707px" width="8" height="9" viewBox="0 0 8 9"><path d="M2 0.5 V8.5 L6.5 4.5 Z" fill="#505050"/></svg>
<div class="a" style="left:231px;top:736px;line-height:20px;font-size:13px;color:#333">显示第 1 到第 8 条记录，总共 8 条记录</div>
<!-- bottom gradient -->
<div class="a" style="left:201px;top:864px;width:1688px;height:59px;background:linear-gradient(rgba(0,0,0,0),rgba(0,0,0,.05) 25%,rgba(0,0,0,.11) 60%,rgba(0,0,0,.15))"></div>
<!-- right arrow overlay -->
<div class="a" style="left:1837px;top:444px;width:44px;height:44px;background:rgba(40,40,40,.55)"></div>
<svg class="a" style="left:1849px;top:456px" width="20" height="20" viewBox="0 0 20 20"><path d="M2 10 H17 M10.5 3 L17.5 10 L10.5 17" stroke="#fff" stroke-width="2" fill="none"/></svg>
<!-- watermark -->
<svg class="a" style="left:840px;top:418px;mix-blend-mode:multiply" width="210" height="86" viewBox="0 0 210 86">
 <defs><radialGradient id="eg" cx=".4" cy=".35" r=".7"><stop offset="0" stop-color="#fdec7e"/><stop offset="1" stop-color="#f6cf72"/></radialGradient>
 <radialGradient id="eg2" cx=".7" cy=".75" r=".4"><stop offset="0" stop-color="#fdec7e"/><stop offset="1" stop-color="#fdec7e" stop-opacity="0"/></radialGradient></defs>
 <ellipse cx="33.5" cy="43" rx="29.6" ry="40" fill="url(#eg)"/>
 <defs><filter id="bl"><feGaussianBlur stdDeviation="2"/></filter><clipPath id="ec"><ellipse cx="33.5" cy="43" rx="29.6" ry="40"/></clipPath></defs><g clip-path="url(#ec)">
 <path d="M4 36 Q12 48 30 48" stroke="#f2a0a8" stroke-width="5" fill="none" opacity=".75" filter="url(#bl)"/>
 <path d="M38 41 Q56 40 63 50" stroke="#f2a0a8" stroke-width="5" fill="none" opacity=".6" filter="url(#bl)"/></g>
 <path d="M23 4 C12 13, 7 27, 10 36 C13 45, 24 47, 34 47 C44 47, 49 51, 50 59 C51 67, 49 74, 43 81 L46 80 C54 73, 57 64, 56 56 C55 47, 48 41, 38 40.5 C28 40, 21 40, 18 33 C15 25, 16 13, 23 4 Z" fill="#fff"/>
 <text transform="translate(73,51) scale(.7,1)" font-family="Liberation Sans" font-size="54" fill="#f9ae86">K</text>
 <text transform="translate(105,51) scale(.6,1)" font-family="Liberation Sans" font-size="54" fill="#f9ae86">T</text>
 <text transform="translate(125,52) scale(.76,1.04)" font-size="50" font-weight="900" fill="#78c678">源</text>
 <text transform="translate(166,52) scale(.78,1)" font-size="48" font-weight="bold" fill="#f9ae86">码</text>
 <g font-family="Liberation Sans" font-size="17" fill="#78c678" text-anchor="middle">
 <text x="75" y="78">k</text><text x="91" y="78">t</text><text x="107" y="78">y</text><text x="129" y="78">m</text><text x="147" y="78">.</text><text x="160.6" y="78">c</text><text x="177.5" y="78">o</text><text x="197.4" y="78">m</text></g>
</svg>

</body></html>
